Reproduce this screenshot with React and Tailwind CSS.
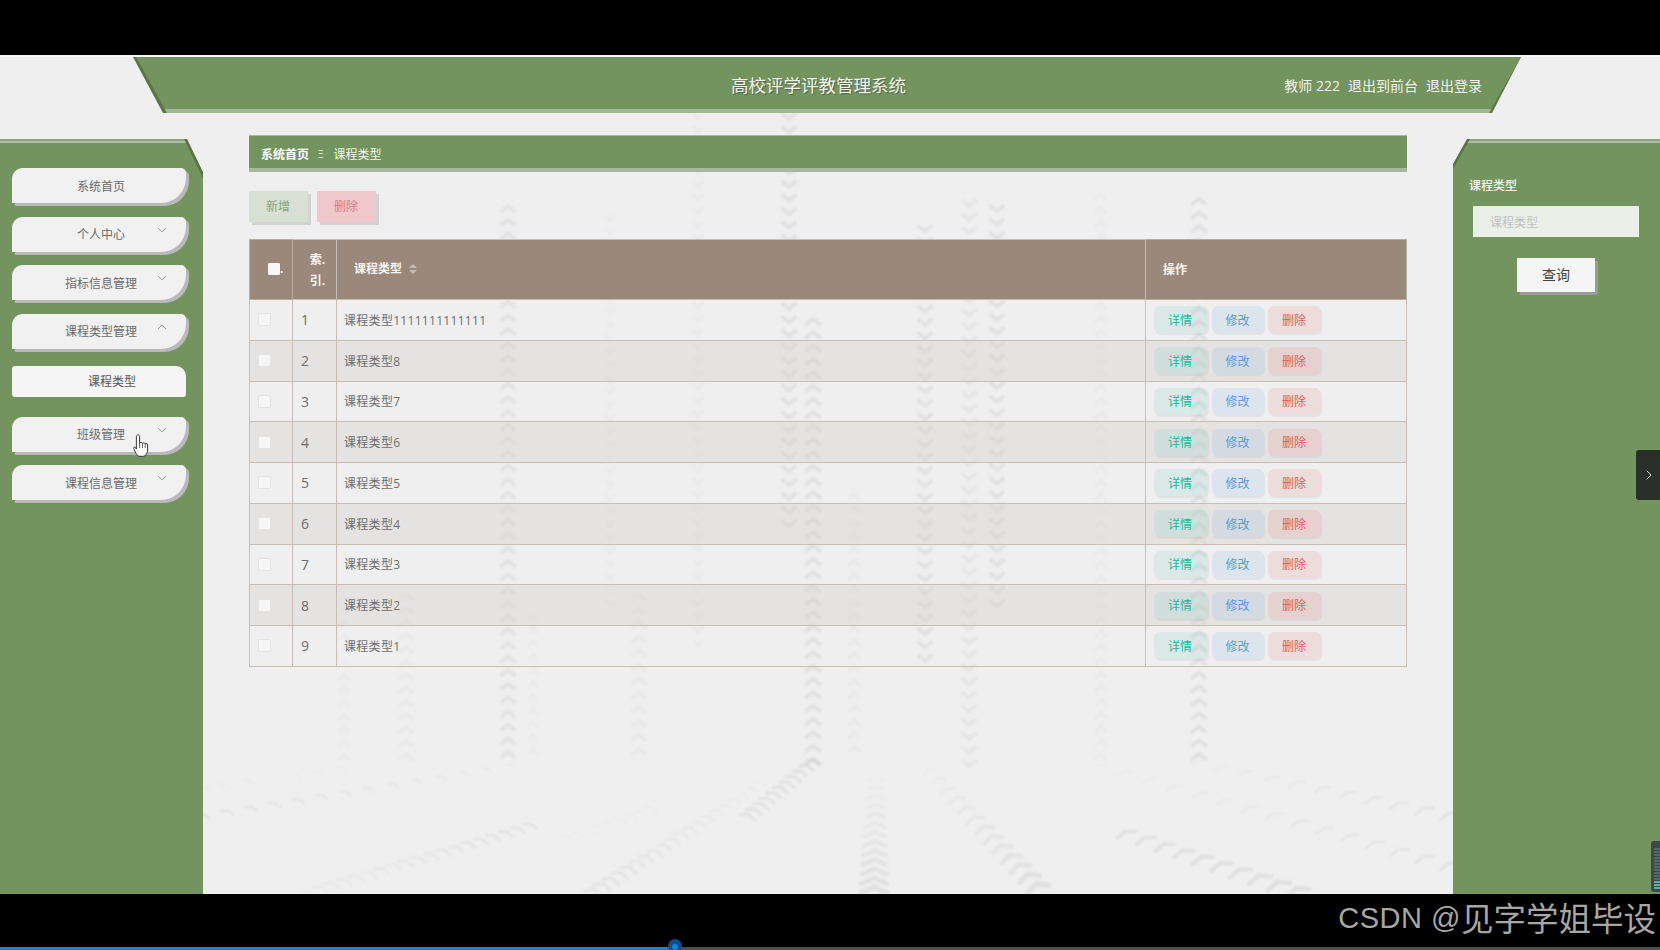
import React from "react";
import { ChevronRight } from "lucide-react";

const rows = [
  "课程类型1111111111111", "课程类型8", "课程类型7", "课程类型6", "课程类型5",
  "课程类型4", "课程类型3", "课程类型2", "课程类型1",
];

const UP = [0, -1], DOWN = [0, 1], L = [0.35, -1], R = [-0.35, -1];
const v = (x, y0, y1, d, o, w = 15) => ({ a: [x, y0], b: [x, y1], n: Math.round((y1 - y0) / 13.5), d, o0: o, o1: o, w0: w, w1: w, h0: 6, h1: 6, s0: 4, s1: 4 });
const tracks = [
  v(508, 212, 758, UP, 0.05),
  v(406, 600, 760, UP, 0.022),
  v(344, 600, 760, UP, 0.015, 10),
  v(533, 620, 755, UP, 0.015, 10),
  v(610, 215, 600, DOWN, 0.015, 10),
  v(639, 600, 755, UP, 0.028),
  v(698, 113, 640, DOWN, 0.02, 11),
  v(789, 113, 520, DOWN, 0.055),
  v(813, 325, 765, UP, 0.06, 16),
  v(854, 500, 752, UP, 0.022, 12),
  v(925, 225, 655, DOWN, 0.055),
  v(969, 200, 760, DOWN, 0.04),
  v(997, 205, 600, DOWN, 0.055),
  v(1101, 200, 760, UP, 0.018, 12),
  v(1199, 205, 760, UP, 0.06, 16),
  { a: [512, 767], b: [203, 817], n: 13, d: L, o0: 0.02, o1: 0.05, w0: 12, w1: 15, h0: 2, h1: 3, s0: 2, s1: 2.6 },
  { a: [410, 760], b: [203, 790], n: 9, d: L, o0: 0.012, o1: 0.018, w0: 12, w1: 15, h0: 2, h1: 3, s0: 2, s1: 2.4 },
  { a: [530, 827], b: [307, 894], n: 18, d: L, o0: 0.05, o1: 0.02, w0: 16, w1: 18, h0: 3, h1: 4, s0: 2.8, s1: 3 },
  { a: [651, 810], b: [558, 843], n: 9, d: L, o0: 0.018, o1: 0.01, w0: 14, w1: 16, h0: 3, h1: 3, s0: 2.4, s1: 2.4 },
  { a: [761, 785], b: [593, 894], n: 19, d: L, o0: 0.012, o1: 0.05, w0: 12, w1: 20, h0: 3, h1: 5, s0: 2.4, s1: 3.4 },
  { a: [813, 763], b: [747, 818], n: 10, d: L, o0: 0.06, o1: 0.05, w0: 16, w1: 18, h0: 3, h1: 4, s0: 3, s1: 3.2 },
  { a: [876, 780], b: [874, 894], n: 12, d: UP, o0: 0.012, o1: 0.06, w0: 18, w1: 30, h0: 3, h1: 7, s0: 3, s1: 5.4 },
  { a: [930, 772], b: [1039, 890], n: 12, d: R, o0: 0.015, o1: 0.06, w0: 16, w1: 26, h0: 3, h1: 7, s0: 2.8, s1: 5.4 },
  { a: [1099, 767], b: [1450, 867], n: 14, d: R, o0: 0.012, o1: 0.05, w0: 16, w1: 22, h0: 2, h1: 4, s0: 2.2, s1: 3.2 },
  { a: [1195, 763], b: [1450, 817], n: 10, d: R, o0: 0.02, o1: 0.05, w0: 14, w1: 22, h0: 2, h1: 4, s0: 2, s1: 3 },
  { a: [1127, 835], b: [1298, 894], n: 9, d: R, o0: 0.06, o1: 0.06, w0: 22, w1: 28, h0: 4, h1: 6, s0: 3.4, s1: 4.8 },
];

function Watermark() {
  const items = [];
  tracks.forEach((t, i) => {
    const len = Math.hypot(t.d[0], t.d[1]);
    const dx = t.d[0] / len, dy = t.d[1] / len;
    for (let k = 0; k <= t.n; k++) {
      const f = k / t.n;
      const x = t.a[0] + (t.b[0] - t.a[0]) * f;
      const y = t.a[1] + (t.b[1] - t.a[1]) * f;
      const w = (t.w0 + (t.w1 - t.w0) * f) / 2;
      const h = t.h0 + (t.h1 - t.h0) * f;
      const nx = -dy, ny = dx;
      const d = `M${x + nx * w} ${y + ny * w}L${x + dx * h} ${y + dy * h}L${x - nx * w} ${y - ny * w}`;
      items.push(
        <path key={`${i}-${k}`} d={d} fill="none" stroke="#000" strokeOpacity={t.o0 + (t.o1 - t.o0) * f} strokeWidth={t.s0 + (t.s1 - t.s0) * f} />
      );
    }
  });
  return (
    <svg className="absolute left-0 top-0 blur-[1px]" width="1660" height="839" viewBox="0 55 1660 839">
      {items}
    </svg>
  );
}

function Chev({ up }) {
  return (
    <svg className="absolute left-[145px] top-[10px]" width="10" height="6" viewBox="0 0 10 6">
      <path d={up ? "M1 5L5 1L9 5" : "M1 1L5 5L9 1"} fill="none" stroke="#9a9a9a" strokeWidth="1" />
    </svg>
  );
}

function MenuItem({ label, arrow, mb = "mb-[13.5px]" }) {
  return (
    <div className={`relative flex h-[35px] w-[174px] items-center justify-center rounded-[11px_5px_25px_0] bg-[#f1f1f1] pl-[4px] pt-[2px] text-[12px] text-[#6b6b6b] shadow-[3px_3px_0_#b9b9b9] ${mb}`}>
      {label}
      {arrow === "down" && <Chev />}
      {arrow === "up" && <Chev up />}
    </div>
  );
}

function Header() {
  return (
    <div className="flex h-[56px] shrink-0 pl-[133px]">
      <div className="h-[56px] w-[1388px] bg-[#5a7647] [clip-path:polygon(0_0,100%_0,calc(100%-29px)_100%,30px_100%)]">
        <div className="flex h-[56px] items-center border-b-[4px] border-[#a5b59c] bg-[#74945f] pl-[598px] pr-[39px] pt-[4px] text-white [clip-path:polygon(3px_0,100%_0,calc(100%-32px)_100%,34px_100%)]">
          <span className="text-[17.5px] text-[#f4f4f0] [text-shadow:1px_1px_1px_#4d6140]">高校评学评教管理系统</span>
          <span className="ml-auto flex gap-[8px] whitespace-nowrap text-[14px] text-[#f2f2ec]">
            <span>教师 222</span>
            <span>退出到前台</span>
            <span>退出登录</span>
          </span>
        </div>
      </div>
    </div>
  );
}

function Sidebar() {
  return (
    <div className="h-full w-[203px] shrink-0 bg-[#58743f] [clip-path:polygon(0_0,187px_0,100%_33px,100%_100%,0_100%)]">
      <div className="relative h-full bg-[#74945f] pl-[12px] pt-[29px] [clip-path:polygon(0_0,184px_0,200px_33px,100%_39px,100%_100%,0_100%)]">
        <div className="absolute left-0 top-0 h-[4px] w-[186px] border-t-[2px] border-b-[2px] border-t-[#8da27f] border-b-[#aebda5]" />
        <MenuItem label="系统首页" />
        <MenuItem label="个人中心" arrow="down" />
        <MenuItem label="指标信息管理" arrow="down" />
        <MenuItem label="课程类型管理" arrow="up" mb="mb-[17px]" />
        <div className="mb-[20px] flex h-[31px] w-[174px] items-center justify-center rounded-[3px_10px_3px_3px] bg-[#f5f5f5] pl-[26px] pt-[2px] text-[12px] text-[#555]">课程类型</div>
        <MenuItem label="班级管理" arrow="down" />
        <MenuItem label="课程信息管理" arrow="down" />
      </div>
    </div>
  );
}

function SortIcon() {
  return (
    <svg className="ml-[7px]" width="8" height="10" viewBox="0 0 8 10">
      <path d="M4 0L8 4H0Z M4 10L0 6H8Z" fill="#c3bbb4" />
    </svg>
  );
}

function Table() {
  return (
    <table className="w-[1157px] table-fixed border-collapse border border-[#c9bdb3] text-[12px]">
      <colgroup>
        <col className="w-[43px]" />
        <col className="w-[44px]" />
        <col className="w-[809px]" />
        <col className="w-[261px]" />
      </colgroup>
      <thead>
        <tr className="h-[60px] bg-[#9a887b] font-bold text-[#f7f5f2]">
          <th className="border border-[#b9aca1] pb-[1px] pl-[18px]">
            <div className="flex items-center">
              <input type="checkbox" readOnly className="h-[12px] w-[12px] appearance-none rounded-[1px] bg-[#f6f6f6]" />
              <span className="leading-[12px]">.</span>
            </div>
          </th>
          <th className="border border-[#c9bdb3] pl-[6px] text-center leading-[21px]">索.<br />引.</th>
          <th className="border border-[#c9bdb3] pb-[1px] pl-[17px] text-left">
            <div className="flex items-center">课程类型<SortIcon /></div>
          </th>
          <th className="border border-[#b9aca1] pl-[17px] text-left">操作</th>
        </tr>
      </thead>
      <tbody>
        {rows.map((name, i) => (
          <tr key={i} className={`h-[40.75px] text-[#6e6e6e] ${i % 2 ? "bg-[#d8d3cf]/40" : ""}`}>
            <td className="border border-[#c9bdb3] pl-[8px]">
              <div className="flex items-center">
                <input type="checkbox" readOnly className="h-[13px] w-[13px] appearance-none rounded-[2px] border border-[#e4e4e4] bg-[#f6f6f6]" />
              </div>
            </td>
            <td className="border border-[#c9bdb3] pl-[8px] text-[14px]">{i + 1}</td>
            <td className="border border-[#c9bdb3] pl-[7px] pt-[2px] tracking-[0.3px]">{name}</td>
            <td className="border border-[#c9bdb3] pl-[8px]">
              <div className="flex gap-[4px]">
                <button className="flex h-[27px] w-[54px] items-center justify-center rounded-[6px] bg-[#29bfa5]/10 pr-[2px] pt-[2px] text-[#22b89c] shadow-[1px_2px_1px_rgba(0,0,0,0.05)]">详情</button>
                <button className="flex h-[27px] w-[52px] items-center justify-center rounded-[6px] bg-[#509ae8]/12 pr-[1px] pt-[2px] text-[#5c9bdc] shadow-[1px_2px_1px_rgba(0,0,0,0.05)]">修改</button>
                <button className="flex h-[27px] w-[53px] items-center justify-center rounded-[6px] bg-[#e05555]/12 pr-[1px] pt-[2px] text-[#dc5f5f] shadow-[1px_2px_1px_rgba(0,0,0,0.05)]">删除</button>
              </div>
            </td>
          </tr>
        ))}
      </tbody>
    </table>
  );
}

function Main() {
  return (
    <div className="h-full flex-1 px-[46px] pt-[22px]">
      <div className="flex h-[37px] items-center border-t border-b-[4px] border-t-[#a9bb9f] border-b-[#a8b7a0] bg-[#74945f] pl-[12px] pt-[5px] text-[12px] text-white">
        <span className="font-bold">系统首页</span>
        <span className="ml-[9px] mr-[10px] text-[10px] text-[#dfe6da]">Ξ</span>
        <span className="text-[#f2f2ee]">课程类型</span>
      </div>
      <div className="mb-[17px] mt-[19px] flex gap-[9px] text-[12px]">
        <button className="h-[31px] w-[59px] bg-[#d7e0d3] pr-[1px] text-[#8aa37c] shadow-[3px_3px_0_#d2d2d2]">新增</button>
        <button className="h-[31px] w-[59px] bg-[#f0c8cc] pr-[1px] text-[#da7c8a] shadow-[3px_3px_0_#d2d2d2]">删除</button>
      </div>
      <Table />
    </div>
  );
}

function RightPanel() {
  return (
    <div className="h-full w-[208px] shrink-0 bg-[#58743f] [clip-path:polygon(14px_0,100%_0,100%_100%,0_100%,0_25px)]">
      <div className="relative h-full bg-[#74945f] pl-[16px] pt-[39px] [clip-path:polygon(17px_0,100%_0,100%_100%,0_100%,0_30px)]">
        <div className="absolute right-0 top-0 h-[4px] w-[194px] border-t-[2px] border-b-[2px] border-t-[#8da27f] border-b-[#aebda5]" />
        <div className="text-[12px] font-medium leading-[16px] text-[#f5f5f0]">课程类型</div>
        <input placeholder="课程类型" className="ml-[4px] mt-[12px] block h-[31px] w-[166px] bg-white/85 pl-[17px] pt-[2px] text-[12px] outline-none placeholder:text-[#c2c2c2]" />
        <button className="ml-[48px] mt-[21px] block h-[34px] w-[78px] bg-[#f5f5f5] pb-[1px] text-[14px] text-[#444] shadow-[3px_3px_0_#9a9d97]">查询</button>
      </div>
    </div>
  );
}

function Hand() {
  return (
    <svg className="absolute left-[133px] top-[379px] z-20" width="16" height="23" viewBox="0 0 16 23">
      <path d="M5 .8c1 0 1.6.8 1.6 1.7V9c.5-.7 2.4-.7 2.9.3.5-.7 2.2-.6 2.7.4.7-.5 2.4-.3 2.4 1V16c0 3-2 6.3-5 6.3H7c-2 0-3-1-4-3L.7 14.5c-.5-1 .8-2.1 1.8-1L3.4 15V2.5C3.4 1.6 4.1.8 5 .8Z" fill="#fff" stroke="#222" strokeWidth="0.9" strokeLinejoin="round" />
      <path d="M6.6 9v5M9.5 9.4V14M12.2 9.8V14" stroke="#222" strokeWidth="0.7" fill="none" />
    </svg>
  );
}

function Meter() {
  const bars = Array.from({ length: 14 });
  return (
    <div className="absolute bottom-[2px] right-0 z-20 flex h-[51px] w-[9px] flex-col justify-end gap-[1px] rounded-l-[3px] bg-[#3d484b] pb-[3px] pl-[3px]">
      {bars.map((_, i) => (
        <div key={i} className={`h-[2px] w-[6px] ${i > 10 ? "bg-[#4fb6a5]" : "bg-[#596669]"}`} />
      ))}
    </div>
  );
}

export default function App() {
  return (
    <div className="flex h-[950px] w-[1660px] flex-col overflow-hidden bg-black font-['Open_Sans','Noto_Sans_CJK_SC',sans-serif]">
      <div className="h-[55px] shrink-0 bg-black" />
      <div className="relative h-[839px] shrink-0 overflow-hidden bg-[#efefef]">
        <Watermark />
        <div className="relative z-10 flex h-full flex-col border-t-2 border-[#fafafa]">
          <Header />
          <div className="flex min-h-0 flex-1">
            <div className="flex h-full flex-col pt-[26px]"><Sidebar /></div>
            <Main />
            <div className="flex h-full flex-col pt-[26px]"><RightPanel /></div>
          </div>
        </div>
        <Hand />
        <div className="absolute right-0 top-[395px] z-20 flex h-[50px] w-[24px] items-center justify-center rounded-l-[3px] bg-[#2a3029] pl-[2px] text-[#ddd]">
          <ChevronRight size={16} strokeWidth={1.5} />
        </div>
        <Meter />
      </div>
      <div className="relative flex flex-1 flex-col bg-black">
        <div className="flex h-[53px] items-center justify-end pb-[4px] pr-[4px] text-[#a6a6a6]">
          <span className="font-['Liberation_Sans',sans-serif] text-[29px] tracking-[0.5px]">CSDN @</span>
          <span className="text-[32.5px] leading-[40px]">见字学姐毕设</span>
        </div>
        <div className="flex h-[3px] bg-[#4d4d4d]">
          <div className="h-full w-[680px] bg-[#0a86e6]" />
        </div>
        <div className="absolute left-[668px] top-[45px] h-[14px] w-[14px] rounded-full bg-[#0d4f85]">
          <div className="ml-[4px] mt-[5px] h-[6px] w-[6px] rounded-full bg-[#0a86e6]" />
        </div>
      </div>
    </div>
  );
}
